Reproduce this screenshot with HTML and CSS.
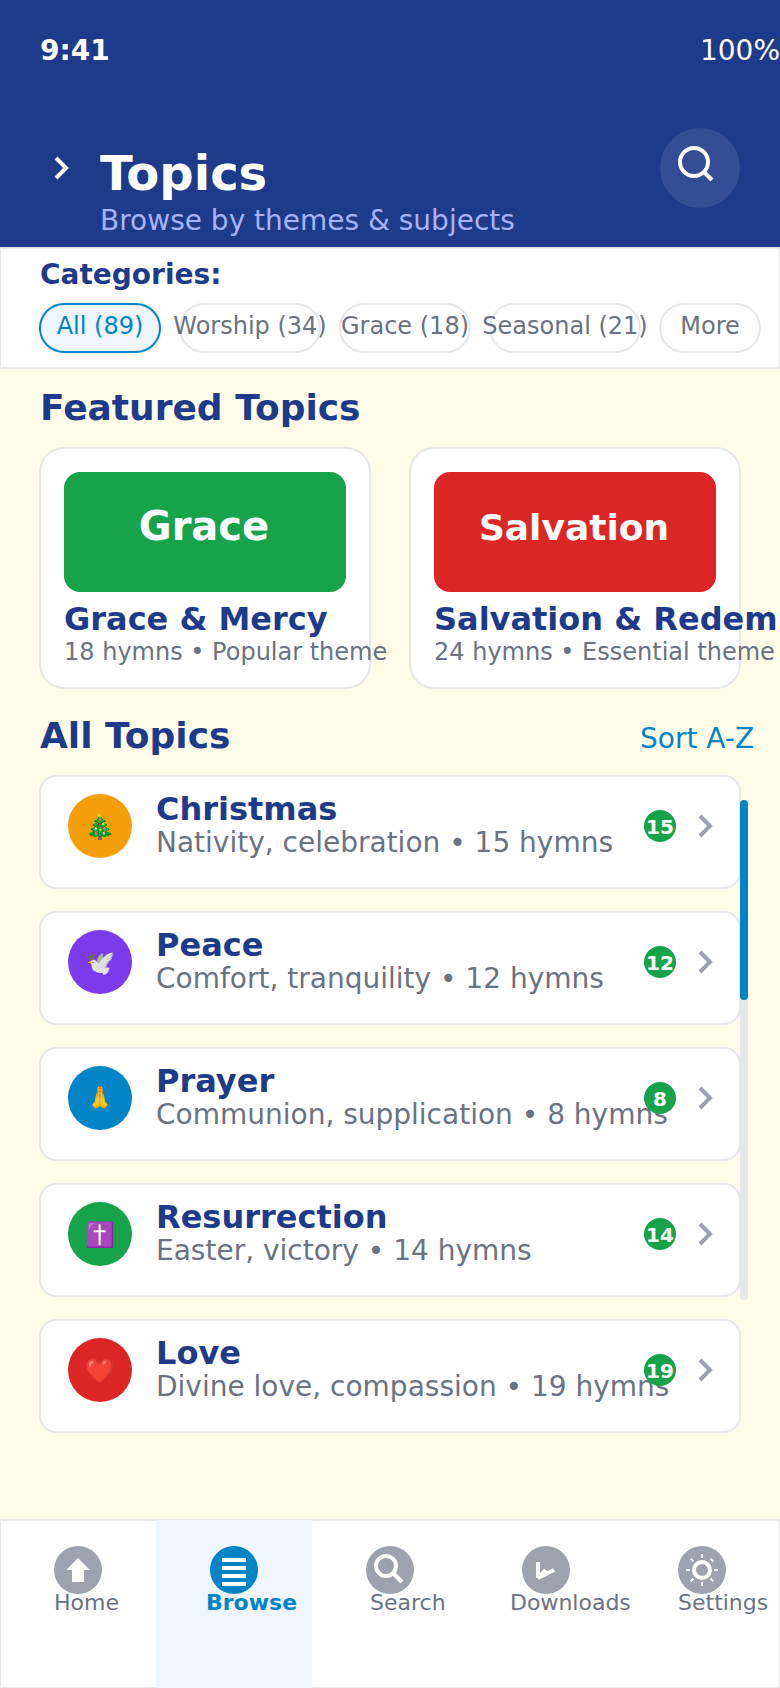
FILE: index.html
```html
<!DOCTYPE html>
<html lang="en">
<head>
<meta charset="utf-8">
<title>Topics</title>
<link rel="stylesheet" href="styles.css">
</head>
<body>
<div class="app">
  <header class="header">
    <div class="status"><span class="time">9:41</span><span class="battery">100%</span></div>
    <div class="titlebar">
      <svg class="back" width="20" height="28" viewBox="0 0 20 28"><path d="M4 4 L14 14 L4 24"/></svg>
      <div class="heading">
        <h1>Topics</h1>
        <p>Browse by themes &amp; subjects</p>
      </div>
      <button class="search-btn" aria-label="Search">
        <svg width="80" height="80" viewBox="0 0 80 80"><circle cx="34" cy="34" r="14"/><path d="M44 44 L52 52"/></svg>
      </button>
    </div>
  </header>

  <section class="categories">
    <h2>Categories:</h2>
    <div class="pills">
      <span class="pill pill-all active">All (89)</span>
      <span class="pill pill-worship">Worship (34)</span>
      <span class="pill pill-grace">Grace (18)</span>
      <span class="pill pill-seasonal">Seasonal (21)</span>
      <span class="pill pill-more">More</span>
    </div>
  </section>

  <main class="content">
    <h2 class="section-title">Featured Topics</h2>
    <div class="featured">
      <article class="feature">
        <div class="banner green">Grace</div>
        <h3>Grace &amp; Mercy</h3>
        <p>18 hymns • Popular theme</p>
      </article>
      <article class="feature">
        <div class="banner red small">Salvation</div>
        <h3>Salvation &amp; Redem</h3>
        <p>24 hymns • Essential theme</p>
      </article>
    </div>

    <div class="list-head">
      <h2 class="section-title">All Topics</h2>
      <a class="sort">Sort A-Z</a>
    </div>

    <div class="list">
      <article class="topic">
        <div class="avatar orange">🎄</div>
        <div class="info"><h3>Christmas</h3><p>Nativity, celebration • 15 hymns</p></div>
        <span class="count">15</span>
        <svg class="chevron" width="20" height="28" viewBox="0 0 20 28"><path d="M4 4 L14 14 L4 24"/></svg>
      </article>
      <article class="topic">
        <div class="avatar purple">🕊️</div>
        <div class="info"><h3>Peace</h3><p>Comfort, tranquility • 12 hymns</p></div>
        <span class="count">12</span>
        <svg class="chevron" width="20" height="28" viewBox="0 0 20 28"><path d="M4 4 L14 14 L4 24"/></svg>
      </article>
      <article class="topic">
        <div class="avatar blue">🙏</div>
        <div class="info"><h3>Prayer</h3><p>Communion, supplication • 8 hymns</p></div>
        <span class="count">8</span>
        <svg class="chevron" width="20" height="28" viewBox="0 0 20 28"><path d="M4 4 L14 14 L4 24"/></svg>
      </article>
      <article class="topic">
        <div class="avatar green">✝️</div>
        <div class="info"><h3>Resurrection</h3><p>Easter, victory • 14 hymns</p></div>
        <span class="count">14</span>
        <svg class="chevron" width="20" height="28" viewBox="0 0 20 28"><path d="M4 4 L14 14 L4 24"/></svg>
      </article>
      <article class="topic">
        <div class="avatar red">❤️</div>
        <div class="info"><h3>Love</h3><p>Divine love, compassion • 19 hymns</p></div>
        <span class="count">19</span>
        <svg class="chevron" width="20" height="28" viewBox="0 0 20 28"><path d="M4 4 L14 14 L4 24"/></svg>
      </article>
      <div class="scrollbar"><div class="thumb"></div></div>
    </div>
  </main>

  <nav class="tabs">
    <a class="tab home">
      <svg width="48" height="48" viewBox="0 0 48 48"><circle class="disc" cx="24" cy="24" r="24"/><path class="solid" d="M24 12 L36 24 H30 V36 H18 V24 H12 Z"/></svg>
      <span>Home</span>
    </a>
    <a class="tab browse active">
      <svg width="48" height="48" viewBox="0 0 48 48"><circle class="disc" cx="24" cy="24" r="24"/><path class="solid" d="M12 12h24v4H12z M12 20h24v4H12z M12 28h24v4H12z M12 36h24v4H12z"/></svg>
      <span>Browse</span>
    </a>
    <a class="tab find">
      <svg width="48" height="48" viewBox="0 0 48 48"><circle class="disc" cx="24" cy="24" r="24"/><g class="line"><circle cx="20" cy="20" r="10"/><path d="M28 28 L36 36"/></g></svg>
      <span>Search</span>
    </a>
    <a class="tab downloads">
      <svg width="48" height="48" viewBox="0 0 48 48"><circle class="disc" cx="24" cy="24" r="24"/><g class="line"><path d="M16 16 V32"/><path d="M16 32 L24 24"/><path d="M16 32 L32 24"/></g></svg>
      <span>Downloads</span>
    </a>
    <a class="tab settings">
      <svg width="48" height="48" viewBox="0 0 48 48"><circle class="disc" cx="24" cy="24" r="24"/><g class="line"><circle cx="24" cy="24" r="8"/><path class="ray" d="M24 8v4 M24 36v4 M8 24h4 M36 24h4 M12.7 12.7l2.8 2.8 M32.5 32.5l2.8 2.8 M12.7 35.3l2.8-2.8 M32.5 12.7l2.8 2.8"/></g></svg>
      <span>Settings</span>
    </a>
  </nav>
</div>
</body>
</html>
```

FILE: styles.css
```css
* { box-sizing: border-box; margin: 0; padding: 0; }

body {
  font-family: "DejaVu Sans", sans-serif;
  background: #fefce8;
}

.app {
  display: flex;
  flex-direction: column;
  width: 780px;
  height: 1688px;
  overflow: hidden;
  background: #fefce8;
}

h1, h2, h3, p, span, a { white-space: nowrap; }

svg { display: block; flex: none; }

/* Header */
.header {
  flex: none;
  height: 248px;
  padding: 34px 0 0 40px;
  background: #1e3a8a;
  color: #fff;
}
.status {
  display: flex;
  justify-content: space-between;
  font-size: 28px;
  line-height: 33px;
}
.time { font-weight: 700; }
.titlebar {
  display: flex;
  align-items: flex-start;
  margin-top: 61px;
  padding: 0 40px 0 12px;
}
.back {
  margin-top: 26px;
  fill: none;
  stroke: #fff;
  stroke-width: 4;
}
.heading { flex: 1; padding: 17px 0 0 28px; }
.heading h1 { font-size: 48px; line-height: 56px; }
.heading p {
  margin-top: 3px;
  font-size: 28px;
  line-height: 33px;
  color: #a5b4fc;
}
.search-btn {
  width: 80px;
  height: 80px;
  border: 0;
  border-radius: 50%;
  background: rgba(255, 255, 255, 0.1);
}
.search-btn svg { fill: none; stroke: #fff; stroke-width: 4; }

/* Categories */
.categories {
  flex: none;
  height: 122px;
  margin: -1px -1px 0;
  padding: 9px 0 0 38px;
  border: 2px solid #e5e7eb;
  background: #fff;
}
.categories h2 {
  padding-left: 1px;
  font-size: 28px;
  line-height: 33px;
  color: #1e3a8a;
}
.pills { display: flex; gap: 18px; margin-top: 12px; }
.pill {
  display: flex;
  flex: none;
  justify-content: center;
  height: 50px;
  padding-top: 7px;
  border: 2px solid #e5e7eb;
  border-radius: 25px;
  font-size: 24px;
  line-height: 28px;
  color: #6b7280;
}
.pill.active { border-color: #0284c7; background: #eff6ff; color: #0284c7; }
.pill-all { width: 122px; }
.pill-worship { width: 142px; }
.pill-grace { width: 132px; }
.pill-seasonal { width: 152px; }
.pill-more { width: 102px; }

/* Content */
.content { flex: 1; min-height: 0; padding: 18px 39px 0; }
.section-title {
  padding-left: 1px;
  font-size: 36px;
  line-height: 42px;
  color: #1e3a8a;
}
.featured { display: flex; gap: 38px; margin-top: 18px; }
.feature {
  flex: none;
  width: 332px;
  height: 242px;
  padding: 23px;
  border: 2px solid #e5e7eb;
  border-radius: 25px;
  background: #fff;
}
.banner {
  height: 120px;
  padding: 31px 2px 0 0;
  border-radius: 16px;
  font-size: 40px;
  font-weight: 700;
  line-height: 47px;
  text-align: center;
  color: #fff;
}
.banner.small { padding-top: 35px; font-size: 36px; line-height: 42px; }
.feature h3 {
  margin-top: 8px;
  font-size: 32px;
  line-height: 38px;
  color: #1e3a8a;
}
.feature p { font-size: 24px; line-height: 28px; color: #6b7280; }

.orange { background: #f59e0b; }
.purple { background: #7c3aed; }
.blue { background: #0284c7; }
.green { background: #16a34a; }
.red { background: #dc2626; }

.list-head {
  display: flex;
  align-items: baseline;
  margin-top: 26px;
}
.list-head .section-title { flex: none; width: 601px; }
.sort { font-size: 28px; line-height: 33px; color: #0284c7; }

/* Topic list */
.list {
  position: relative;
  display: flex;
  flex-direction: column;
  gap: 22px;
  margin-top: 18px;
}
.topic {
  display: flex;
  align-items: flex-start;
  height: 114px;
  padding-left: 27px;
  border: 2px solid #e5e7eb;
  border-radius: 17px;
  background: #fff;
}
.avatar {
  flex: none;
  width: 64px;
  height: 64px;
  margin-top: 17px;
  border-radius: 50%;
  font-family: "DejaVu Sans", "Noto Color Emoji", sans-serif;
  font-size: 24px;
  line-height: 67px;
  text-align: center;
}
.info { width: 488px; margin: 13px 0 0 24px; }
.info h3 { font-size: 32px; line-height: 38px; color: #1e3a8a; }
.info p {
  margin-top: -2px;
  font-size: 28px;
  line-height: 33px;
  color: #6b7280;
}
.count {
  flex: none;
  width: 32px;
  height: 32px;
  margin-top: 33px;
  padding-top: 5px;
  border-radius: 50%;
  background: #16a34a;
  font-size: 20px;
  font-weight: 700;
  line-height: 24px;
  text-align: center;
  color: #fff;
}
.chevron {
  margin: 35px 0 0 20px;
  fill: none;
  stroke: #9ca3af;
  stroke-width: 4;
}
.scrollbar {
  position: absolute;
  top: 25px;
  right: -7px;
  width: 8px;
  height: 500px;
  border-radius: 4px;
  background: #e5e7eb;
}
.thumb { height: 200px; border-radius: 4px; background: #0284c7; }

/* Tab bar */
.tabs {
  display: flex;
  flex: none;
  height: 168px;
  background: #fff;
  box-shadow: 0 0 0 1px #e5e7eb, inset 0 0 0 1px #e5e7eb;
}
.tab { width: 156px; padding-top: 26px; color: #6b7280; }
.tab.active { background: #eff6ff; color: #0284c7; font-weight: 700; }
.tab svg { margin-left: 54px; }
.tab span {
  display: block;
  margin-top: -4px;
  font-size: 22px;
  line-height: 25px;
}
.home span { padding-left: 54px; }
.browse span { padding-left: 50px; }
.find span { padding-left: 58px; }
.downloads span { padding-left: 42px; }
.settings span { padding-left: 54px; }
.disc { fill: #9ca3af; }
.active .disc { fill: #0284c7; }
.solid { fill: #fff; }
.line { fill: none; stroke: #fff; stroke-width: 4; }
.ray { stroke-width: 2; }
```
